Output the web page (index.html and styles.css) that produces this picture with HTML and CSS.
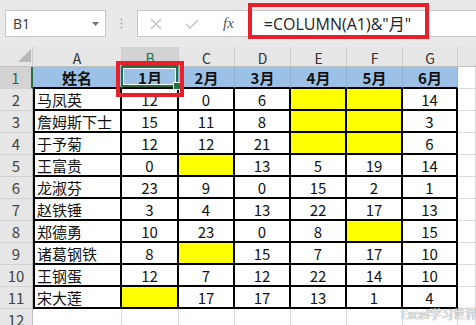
FILE: index.html
```html
<!DOCTYPE html>
<html lang="zh-CN">
<head>
<meta charset="utf-8">
<title>Excel</title>
<link rel="stylesheet" href="styles.css">
</head>
<body>
<div class="app">
  <div class="fbar">
    <div class="namebox"><span>B1</span><svg class="caret" width="7" height="4" viewBox="0 0 7 4"><polygon points="0,0 7,0 3.5,4" fill="#707070"/></svg></div>
    <div class="dots"><svg width="3" height="11" viewBox="0 0 3 11"><circle cx="1.5" cy="1.5" r="1" fill="#a8a8a8"/><circle cx="1.5" cy="5.5" r="1" fill="#a8a8a8"/><circle cx="1.5" cy="9.5" r="1" fill="#a8a8a8"/></svg></div>
    <div class="finput">
      <svg class="ico-x" width="12" height="12" viewBox="0 0 12 12"><path d="M1 1L11 11M11 1L1 11" stroke="#c4c4c4" stroke-width="1.4" fill="none"/></svg>
      <svg class="ico-chk" width="14" height="10" viewBox="0 0 14 10"><path d="M1 5L5 9L13 1" stroke="#c4c4c4" stroke-width="1.4" fill="none"/></svg>
      <span class="fx">fx</span>
      <span class="ftext">=COLUMN(A1)&amp;"月"</span>
    </div>
  </div>

  <div class="sheet">
    <div class="corner"><svg width="13" height="13" viewBox="0 0 13 13"><polygon points="13,0 13,13 0,13" fill="#b8b8b8"/></svg></div>
    <div class="ch">A</div><div class="ch sel">B</div><div class="ch">C</div><div class="ch">D</div><div class="ch">E</div><div class="ch">F</div><div class="ch">G</div><div class="ch last"></div>

    <div class="rh sel">1</div>
    <div class="hd">姓名</div><div class="hd active">1月</div><div class="hd">2月</div><div class="hd">3月</div><div class="hd">4月</div><div class="hd">5月</div><div class="hd">6月</div><div class="c"></div>

    <div class="rh">2</div>
    <div class="t a">马凤英</div><div class="t">12</div><div class="t">0</div><div class="t">6</div><div class="t y"></div><div class="t y"></div><div class="t">14</div><div class="c"></div>

    <div class="rh">3</div>
    <div class="t a">詹姆斯下士</div><div class="t">15</div><div class="t">11</div><div class="t">8</div><div class="t y"></div><div class="t y"></div><div class="t">3</div><div class="c"></div>

    <div class="rh">4</div>
    <div class="t a">于予菊</div><div class="t">12</div><div class="t">12</div><div class="t">21</div><div class="t y"></div><div class="t y"></div><div class="t">6</div><div class="c"></div>

    <div class="rh">5</div>
    <div class="t a">王富贵</div><div class="t">0</div><div class="t y"></div><div class="t">13</div><div class="t">5</div><div class="t">19</div><div class="t">14</div><div class="c"></div>

    <div class="rh">6</div>
    <div class="t a">龙淑芬</div><div class="t">23</div><div class="t">9</div><div class="t">0</div><div class="t">15</div><div class="t">2</div><div class="t">1</div><div class="c"></div>

    <div class="rh">7</div>
    <div class="t a">赵铁锤</div><div class="t">3</div><div class="t">4</div><div class="t">13</div><div class="t">22</div><div class="t">17</div><div class="t">13</div><div class="c"></div>

    <div class="rh">8</div>
    <div class="t a">郑德勇</div><div class="t">10</div><div class="t">23</div><div class="t">0</div><div class="t">8</div><div class="t y"></div><div class="t">15</div><div class="c"></div>

    <div class="rh">9</div>
    <div class="t a">诸葛钢铁</div><div class="t">8</div><div class="t y"></div><div class="t">15</div><div class="t">7</div><div class="t">17</div><div class="t">10</div><div class="c"></div>

    <div class="rh">10</div>
    <div class="t a">王钢蛋</div><div class="t">12</div><div class="t">7</div><div class="t">12</div><div class="t">22</div><div class="t">14</div><div class="t">10</div><div class="c"></div>

    <div class="rh">11</div>
    <div class="t a">宋大莲</div><div class="t y"></div><div class="t">17</div><div class="t">17</div><div class="t">13</div><div class="t">1</div><div class="t">4</div><div class="c"></div>

    <div class="rh">12</div>
    <div class="c"></div><div class="c"></div><div class="c"></div><div class="c"></div><div class="c"></div><div class="c"></div><div class="c"></div><div class="c"></div>
  </div>

  <div class="redbox redbox-formula"></div>
  <div class="redbox redbox-cell"></div>
  <div class="watermark">Excel学习世界</div>
</div>
</body>
</html>
```

FILE: styles.css
```css
* { box-sizing: border-box; margin: 0; padding: 0; }

body {
  width: 476px;
  height: 325px;
  overflow: hidden;
  background: #e6e6e6;
  font-family: "Noto Sans CJK SC", sans-serif;
}

.app {
  position: relative;
  width: 476px;
  height: 325px;
  overflow: hidden;
}

/* formula bar */
.fbar {
  display: flex;
  align-items: flex-start;
  height: 47px;
  padding: 10px 0 0 5px;
  background: #e9e9e9;
}

.namebox {
  width: 101px;
  height: 27px;
  background: #fff;
  border: 1px solid #c6c6c6;
  display: flex;
  align-items: center;
  justify-content: space-between;
  padding: 0 6px 0 7px;
  font-family: "Open Sans", sans-serif;
  font-size: 14px;
  color: #333;
}

.dots {
  width: 31px;
  height: 27px;
  display: flex;
  align-items: center;
  justify-content: center;
}

.finput {
  flex: 1;
  height: 27px;
  background: #fff;
  border: 1px solid #c6c6c6;
  border-right: none;
  display: flex;
  align-items: center;
  padding-left: 12px;
}

.ico-chk { margin-left: 23px; }

.fx {
  margin-left: 24px;
  font-family: "Liberation Serif", serif;
  font-style: italic;
  font-size: 15px;
  color: #555;
  line-height: 1;
}

.ftext {
  margin-left: 30px;
  font-family: "Open Sans", "Noto Sans CJK SC", sans-serif;
  font-size: 16px;
  color: #222;
  white-space: nowrap;
  line-height: 1;
}

/* sheet grid */
.sheet {
  display: grid;
  grid-template-columns: 33px 89px 57px 56px 56px 56px 56px 55px 1fr;
  grid-template-rows: 20px repeat(12, 22px);
  background: #fff;
}

.corner {
  background: #e6e6e6;
  border-right: 1px solid #c9c9c9;
  border-bottom: 1px solid #bfbfbf;
  display: flex;
  justify-content: flex-end;
  align-items: flex-end;
  padding: 0 1px 4px 0;
}

.ch {
  background: #e6e6e6;
  border-right: 1px solid #cdcdcd;
  border-bottom: 1px solid #bfbfbf;
  text-align: center;
  font-size: 14px;
  line-height: 22px;
  color: #333;
  overflow: hidden;
}
.ch.last { border-right: none; }
.ch.sel {
  background: #d3d3d3;
  color: #217346;
  border-bottom: 2px solid #217346;
}

.rh {
  background: #e6e6e6;
  border-right: 1px solid #bfbfbf;
  border-bottom: 1px solid #d2d2d2;
  display: flex;
  align-items: center;
  justify-content: center;
  font-size: 15px;
  color: #444;
}
.rh.sel {
  background: #d3d3d3;
  color: #217346;
  border-right: 2px solid #217346;
}

.c {
  border-right: 1px solid #dadada;
  border-bottom: 1px solid #dadada;
}

.hd {
  background: #9bc2e6;
  border-right: 1px solid #8fb0cf;
  border-bottom: 2px solid #000;
  display: flex;
  align-items: center;
  justify-content: center;
  font-size: 15px;
  font-weight: bold;
  color: #111;
}

.hd.active { position: relative; }
.hd.active::before {
  content: "";
  position: absolute;
  left: -1px;
  top: -1px;
  right: 0;
  bottom: 0;
  border: 2px solid #217346;
  box-shadow: inset 0 0 0 1px #fff;
}
.hd.active::after {
  content: "";
  position: absolute;
  right: -3px;
  bottom: -3px;
  width: 6px;
  height: 6px;
  background: #217346;
  border: 1px solid #fff;
}

.t {
  border-right: 2px solid #000;
  border-bottom: 2px solid #000;
  display: flex;
  align-items: center;
  justify-content: center;
  font-size: 15px;
  color: #111;
  background: #fff;
}
.t.a {
  border-left: 2px solid #000;
  justify-content: flex-start;
  padding-left: 2px;
}
.t.y { background: #ffff00; }

/* annotations */
.redbox {
  position: absolute;
  border: 4px solid #e8202a;
}
.redbox-formula { left: 248px; top: 3px; width: 181px; height: 36px; }
.redbox-cell { left: 116px; top: 61px; width: 68px; height: 36px; }

.watermark {
  position: absolute;
  left: 401px;
  top: 308px;
  font-family: "Noto Sans CJK SC", sans-serif;
  font-size: 12px;
  line-height: 12px;
  color: rgba(255, 255, 255, 0.9);
  text-shadow: 0 0 1px #777, 0 0 1px #999;
  white-space: nowrap;
}
```
